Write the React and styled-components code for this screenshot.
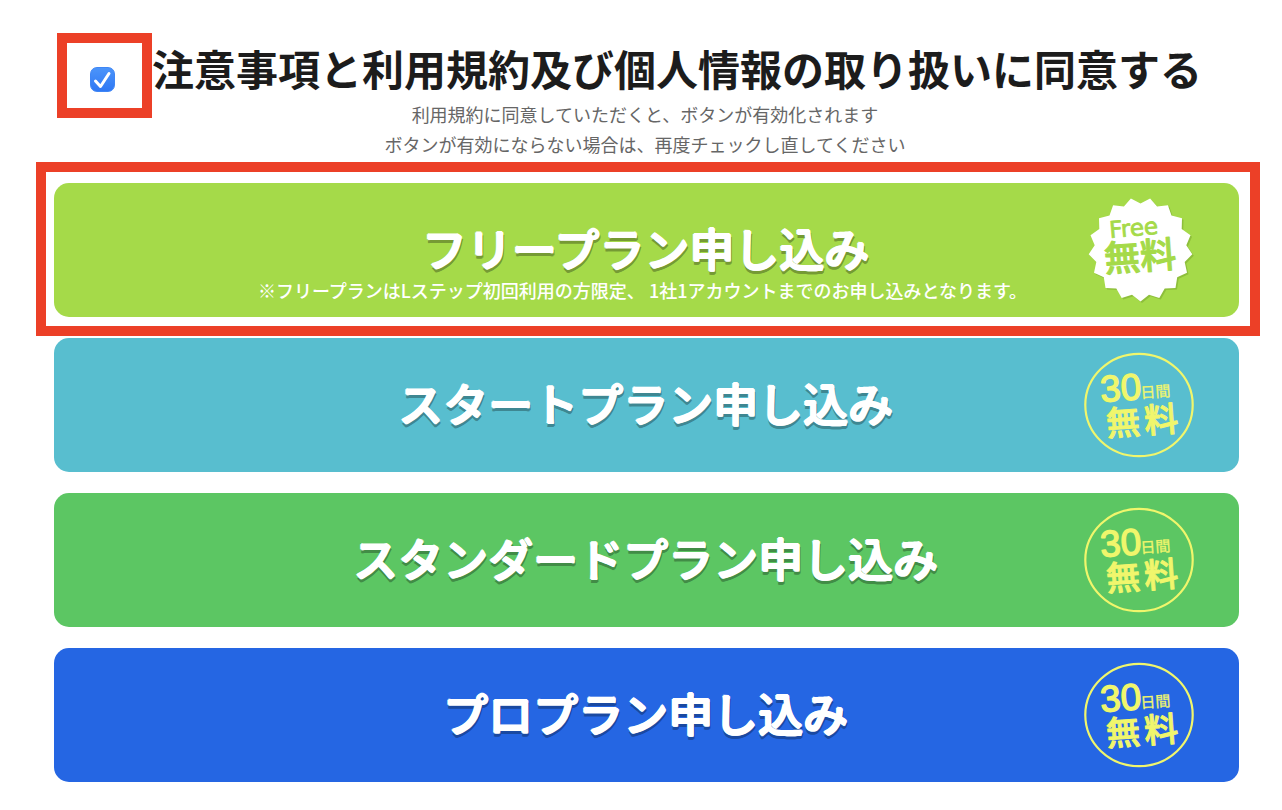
import React, { useState } from 'react';
import styled, { createGlobalStyle } from 'styled-components';

const GlobalStyle = createGlobalStyle`
  * {
    box-sizing: border-box;
  }

  body {
    margin: 0;
    background-color: white;
    font-family: "Noto Sans CJK JP", sans-serif;
  }
`;

const Page = styled.main`
  padding: 33px 22px 28px 36px;
`;

const AgreeRow = styled.div`
  display: flex;
  justify-content: center;
  align-items: flex-start;
  padding-right: 37px;
`;

const CheckFrame = styled.div`
  display: flex;
  align-items: center;
  justify-content: center;
  flex-shrink: 0;
  width: 95px;
  height: 85px;
  margin-bottom: -20px;
  padding: 8px 4px 0 0;
  border: 10px solid #ec4027;
`;

const CheckHolder = styled.span`
  position: relative;
  width: 25px;
  height: 25px;

  svg {
    position: absolute;
    top: 0;
    left: 0;
    pointer-events: none;
  }
`;

const Checkbox = styled.input`
  appearance: none;
  display: block;
  width: 25px;
  height: 25px;
  margin: 0;
  border: 1px solid #b5b5b5;
  border-radius: 7px;
  background-color: white;
  cursor: pointer;

  &:checked {
    border-color: #3f86f5;
    background: linear-gradient(#4b94fa, #2f78f4);
  }
`;

const Title = styled.h1`
  margin: 0;
  padding-top: 5px;
  color: #1c1c1c;
  font-size: 42px;
  line-height: 60px;
  font-weight: 700;
`;

const Description = styled.p`
  margin: 0 6px 3px 0;
  padding-top: 1px;
  color: #666;
  font-size: 18px;
  line-height: 30px;
  text-align: center;
`;

const Highlight = styled.div`
  margin-bottom: 2px;
  padding: 11px 11px 9px 8px;
  border: 10px solid #ec4027;
`;

const PlanList = styled.div`
  display: flex;
  flex-direction: column;
  gap: 21px;
  margin: 0 21px 0 18px;
`;

const PlanButton = styled.button`
  position: relative;
  display: flex;
  flex-direction: column;
  align-items: center;
  justify-content: center;
  width: 100%;
  height: 134px;
  padding: 0 2px 4px 0;
  border: none;
  border-radius: 15px;
  background-color: ${(props) => props.$color};
  color: white;
  font-family: inherit;
  cursor: pointer;
`;

// the white shadows thicken the strokes and round their ends
const PlanName = styled.span`
  font-size: 45px;
  line-height: 54px;
  font-weight: 500;
  text-shadow:
    1px 0 0 white,
    -1px 0 0 white,
    0 1px 0 white,
    0 -1px 0 white,
    1px 1px 0 white,
    0 4px 0 ${(props) => props.$shadow},
    1px 4px 0 ${(props) => props.$shadow},
    2px 3px 0 ${(props) => props.$shadow};
`;

const PlanNote = styled.span`
  margin-bottom: -30px;
  padding-right: 6px;
  font-size: 18px;
  line-height: 30px;
  font-weight: 500;
`;

const Badge = styled.svg`
  position: absolute;
  top: 12px;
  right: 40px;
  width: 120px;
  height: 110px;
  font-family: "Noto Sans CJK JP", sans-serif;
  font-weight: 500;
`;

// 17-pointed seal, first tip pointing straight down
const sealPoints = Array.from({ length: 34 }, (_, i) => {
  const r = i % 2 === 0 ? 52 : 46;
  const angle = Math.PI / 2 + (i * Math.PI) / 17;
  return `${(61.5 + r * Math.cos(angle)).toFixed(1)},${(54.5 + r * Math.sin(angle)).toFixed(1)}`;
}).join(' ');

const FreeBadge = () => (
  <Badge viewBox="0 0 120 110">
    <polygon points={sealPoints} fill="#7fae32" opacity="0.6" transform="translate(1.5 1.5)" />
    <polygon points={sealPoints} fill="white" />
    <g fill="#a5da49" stroke="#a5da49" strokeLinejoin="round">
      <text x="31" y="43" fontSize="23" fontWeight="400" fontFamily="DejaVu Sans, sans-serif" strokeWidth="0.8" transform="rotate(-5 31 43)">Free</text>
      <text x="26" y="77" fontSize="36" strokeWidth="1" transform="rotate(-4 26 77)">無料</text>
    </g>
  </Badge>
);

const TrialBadge = () => (
  <Badge viewBox="0 0 120 110">
    <ellipse cx="60" cy="55" rx="53.7" ry="51.2" fill="none" stroke="#f0f66c" strokeWidth="2.2" />
    <g fill="#f0f66c" stroke="#f0f66c" strokeLinejoin="round">
      <g transform="rotate(-4 22 52)">
        <text x="22" y="52" fontSize="37" fontWeight="400" fontFamily="Liberation Sans, sans-serif" strokeWidth="1.4">30</text>
        <text x="62" y="51" fontSize="15" fontWeight="400" strokeWidth="0.3">日間</text>
      </g>
      <g transform="rotate(-4 27 86)" fontSize="34" strokeWidth="1">
        <text x="28" y="86">無</text>
        <text x="66" y="86">料</text>
      </g>
    </g>
  </Badge>
);

const plans = [
  { name: 'スタートプラン申し込み', color: '#58becf', shadow: '#3e8792' },
  { name: 'スタンダードプラン申し込み', color: '#5cc663', shadow: '#418c46' },
  { name: 'プロプラン申し込み', color: '#2566e3', shadow: '#1a49a1' },
];

const App = () => {
  const [agreed, setAgreed] = useState(true);

  return (
    <Page>
      <GlobalStyle />
      <AgreeRow>
        <CheckFrame>
          <CheckHolder>
            <Checkbox
              type="checkbox"
              id="agree"
              checked={agreed}
              onChange={(e) => setAgreed(e.target.checked)}
            />
            {agreed && (
              <svg width="25" height="25" viewBox="0 0 25 25" fill="none">
                <path d="M5.5 14L10.5 19.5L19 6.5" stroke="white" strokeWidth="3" strokeLinecap="round" strokeLinejoin="round" />
              </svg>
            )}
          </CheckHolder>
        </CheckFrame>
        <Title>
          <label htmlFor="agree">注意事項と利用規約及び個人情報の取り扱いに同意する</label>
        </Title>
      </AgreeRow>
      <Description>
        利用規約に同意していただくと、ボタンが有効化されます
        <br />
        ボタンが有効にならない場合は、再度チェックし直してください
      </Description>

      <Highlight>
        <PlanButton type="button" $color="#a5da49" disabled={!agreed}>
          <PlanName $shadow="#759a34">フリープラン申し込み</PlanName>
          <PlanNote>※フリープランはLステップ初回利用の方限定、 1社1アカウントまでのお申し込みとなります。</PlanNote>
          <FreeBadge />
        </PlanButton>
      </Highlight>
      <PlanList>
        {plans.map((plan) => (
          <PlanButton key={plan.name} type="button" $color={plan.color} disabled={!agreed}>
            <PlanName $shadow={plan.shadow}>{plan.name}</PlanName>
            <TrialBadge />
          </PlanButton>
        ))}
      </PlanList>
    </Page>
  );
};

export default App;
